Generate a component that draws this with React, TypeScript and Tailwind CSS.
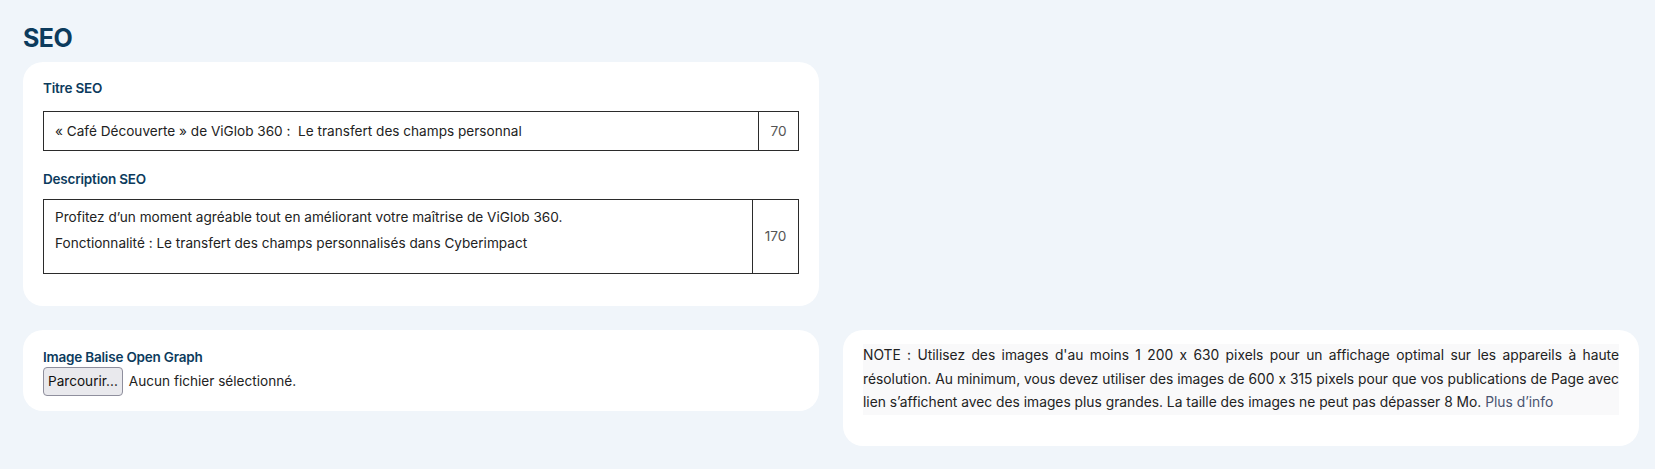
import React from 'react';

const body = "font-['Inter','Noto_Sans',sans-serif] [font-feature-settings:'calt'_0]";

const Label = ({ children }: { children: React.ReactNode }) => (
    <div className="text-[13.5px] font-semibold leading-[18px] tracking-[-0.2px] text-[#0c3b5d]">{children}</div>
);

export default function App() {
    return (
        <div className={`min-h-[469px] w-full bg-[#f0f5fa] pl-[23px] pr-[16px] pt-[22px] ${body}`}>
            <h1 className="text-[25px] font-bold leading-[32px] tracking-[-0.5px] text-[#0c3b5d]">SEO</h1>

            <div className="mt-[8px] grid grid-cols-2 gap-x-[24px]">
                {/* SEO card */}
                <div className="rounded-[20px] bg-white px-[20px] pb-[32px] pt-[17px]">
                    <Label>Titre SEO</Label>
                    <div className="mt-[14px] flex h-[40px] border border-[#2b2b2b]">
                        <div className="flex flex-1 items-center pl-[11px] text-[13.6px] text-[#222]">
                            « Café Découverte » de ViGlob 360 :&nbsp; Le transfert des champs personnal
                        </div>
                        <div className="flex w-[40px] items-center justify-center border-l border-[#2b2b2b] text-[13.6px] text-[#555]">
                            70
                        </div>
                    </div>

                    <div className="mt-[19px]">
                        <Label>Description SEO</Label>
                    </div>
                    <div className="mt-[11px] flex h-[75px] border border-[#2b2b2b]">
                        <div className="flex-1 pl-[11px] pt-[9px] text-[13.6px] leading-[17px] text-[#222]">
                            <p>Profitez d’un moment agréable tout en améliorant votre maîtrise de ViGlob 360.</p>
                            <p className="mt-[9px]">Fonctionnalité : Le transfert des champs personnalisés dans Cyberimpact</p>
                        </div>
                        <div className="flex w-[46px] items-center justify-center border-l border-[#2b2b2b] text-[13.6px] text-[#555]">
                            170
                        </div>
                    </div>
                </div>

                <div />

                {/* Open Graph image */}
                <div className="mt-[24px] self-start rounded-[20px] bg-white px-[20px] pb-[15px] pt-[18px]">
                    <Label>Image Balise Open Graph</Label>
                    <div className="mt-[1px] flex items-center gap-[6px]">
                        <button className="h-[29px] rounded-[4px] border border-[#8f8f9d] bg-[#e9e9ed] px-[4px] text-[13.6px] text-[#111]">
                            Parcourir...
                        </button>
                        <span className="text-[13.6px] text-[#222]">Aucun fichier sélectionné.</span>
                    </div>
                </div>

                {/* Note */}
                <div className="mt-[24px] rounded-[20px] bg-white px-[20px] pb-[31px] pt-[14px]">
                    <p className="bg-[#f9f9fa] text-justify text-[13.8px] leading-[23.5px] text-[#222]">
                        NOTE : Utilisez des images d'au moins 1 200 x 630 pixels pour un affichage optimal sur les appareils à haute résolution. Au minimum, vous devez utiliser des images de 600 x 315 pixels pour que vos publications de Page avec lien s’affichent avec des images plus grandes. La taille des images ne peut pas dépasser 8 Mo.{' '}
                        <a href="#" className="text-[#4a5470]">Plus d’info</a>
                    </p>
                </div>
            </div>
        </div>
    );
}
